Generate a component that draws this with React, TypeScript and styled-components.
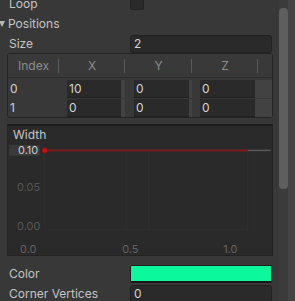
import React from 'react';
import styled, { createGlobalStyle } from 'styled-components';

const Global = createGlobalStyle`
  html, body { margin: 0; padding: 0; background: #383838; overflow: hidden; }
  body { font-family: Inter, "Noto Sans", sans-serif; font-size: 12px; color: #c4c4c4; }
  #root { width: 295px; height: 301px; }
`;

const Page = styled.div`
  display: flex;
  width: 295px;
  height: 301px;
  overflow: hidden;
  background: #383838;
`;

const Content = styled.div`
  width: 276px;
  display: flex;
  flex-direction: column;
  margin-top: -5px;
`;

const Row = styled.div<{ $mt?: number }>`
  display: flex;
  align-items: center;
  height: 18px;
  margin-top: ${(p) => p.$mt ?? 2}px;
  flex-shrink: 0;
`;

const Label = styled.div`
  width: 121px;
  padding-left: 9px;
  white-space: nowrap;
  line-height: 18px;
`;

const FoldLabel = styled.div`
  display: flex;
  align-items: center;
  gap: 3px;
  line-height: 18px;
`;

const Arrow = styled.span`
  width: 0;
  height: 0;
  border-left: 3.5px solid transparent;
  border-right: 3.5px solid transparent;
  border-top: 6px solid #b8b8b8;
  margin-left: -1px;
`;

const Checkbox = styled.div`
  width: 12px;
  height: 12px;
  background: #2a2a2a;
  border: 1px solid #232323;
  border-radius: 2px;
  margin-top: -2px;
`;

const Field = styled.div<{ $w?: number }>`
  box-sizing: border-box;
  width: ${(p) => p.$w ?? 142}px;
  height: 18px;
  background: #2a2a2a;
  border: 1px solid #212121;
  border-radius: 3px;
  padding-left: 3px;
  line-height: 16px;
  color: #d2d2d2;
`;

const ColorField = styled.div`
  box-sizing: border-box;
  width: 142px;
  height: 18px;
  background: #0cf89c;
  border: 1px solid #1f1f1f;
  border-bottom: 2px solid #1a1a1a;
  border-radius: 2px;
`;

const Table = styled.div`
  box-sizing: border-box;
  margin: 0 0 0 7px;
  width: 266px;
  border: 1px solid #242424;
  border-radius: 3px;
  display: flex;
  flex-direction: column;
  padding-bottom: 1px;
  flex-shrink: 0;
`;

const Grid = styled.div`
  display: grid;
  grid-template-columns: 51px 66px 67px 66px 1fr;
`;

const HeaderRow = styled(Grid)`
  height: 23px;
  border-bottom: 1px solid #2c2c2c;
  background: #393939;
`;

const HeaderCell = styled.div<{ $sep?: boolean }>`
  position: relative;
  display: flex;
  align-items: center;
  justify-content: center;
  color: #8c8c8c;
  &::after {
    content: '';
    display: ${(p) => (p.$sep ? 'block' : 'none')};
    position: absolute;
    right: 0;
    top: 5px;
    width: 1px;
    height: 14px;
    background: #5a5a5a;
  }
`;

const DataRow = styled(Grid)`
  height: 17px;
  margin-top: 2px;
  &:first-of-type { margin-top: 1px; }
`;

const IndexCell = styled.div`
  padding-left: 2px;
  line-height: 17px;
  color: #d0d0d0;
`;

const ValueCell = styled.div<{ $pl: number; $pr: number }>`
  display: flex;
  padding-left: ${(p) => p.$pl}px;
  padding-right: ${(p) => p.$pr}px;
  background: linear-gradient(to right, #383838 0 ${(p) => p.$pl}px, #424242 ${(p) => p.$pl}px);
`;

const CellField = styled.div`
  flex: 1;
  background: #2a2a2a;
  border-bottom: 1px solid #202020;
  padding-left: 2px;
  line-height: 17px;
  color: #d4d4d4;
`;

const Filler = styled.div`
  background: #424242;
`;

const CurvePanel = styled.div`
  box-sizing: border-box;
  margin: 6px 0 0 7px;
  width: 266px;
  height: 132px;
  background: #2a2a2a;
  border: 1px solid #232323;
  border-top: 2px solid #1c1c1c;
  display: flex;
  flex-direction: column;
  flex-shrink: 0;
`;

const CurveTitle = styled.div`
  padding: 1px 0 0 5px;
  height: 16px;
  line-height: 16px;
  color: #c8c8c8;
`;

const Chart = styled.svg`
  display: block;
  font-family: Inter, "Noto Sans", sans-serif;
`;

const Scroll = styled.div`
  width: 19px;
  display: flex;
  flex-direction: column;
  padding-top: 8px;
  background: linear-gradient(to right, #383838 0 3px, #3b3b3b 3px 12px, #444444 12px);
`;

const Thumb = styled.div`
  margin-left: 3px;
  width: 9px;
  height: 181px;
  background: #5e5e5e;
  border-radius: 4px;
`;

const cols = [
  { v: ['10', '0'], pl: 8, pr: 4 },
  { v: ['0', '0'], pl: 9, pr: 3 },
  { v: ['0', '0'], pl: 8, pr: 3 },
];

export default function App() {
  return (
    <>
      <Global />
      <Page>
        <Content>
          <Row $mt={0}>
            <Label>Loop</Label>
            <Checkbox />
          </Row>
          <Row>
            <FoldLabel>
              <Arrow />
              <span>Positions</span>
            </FoldLabel>
          </Row>
          <Row>
            <Label>Size</Label>
            <Field>2</Field>
          </Row>
          <Table>
            <HeaderRow>
              <HeaderCell $sep>Index</HeaderCell>
              <HeaderCell $sep>X</HeaderCell>
              <HeaderCell $sep>Y</HeaderCell>
              <HeaderCell $sep>Z</HeaderCell>
              <HeaderCell />
            </HeaderRow>
            {[0, 1].map((r) => (
              <DataRow key={r}>
                <IndexCell>{r}</IndexCell>
                {cols.map((c, i) => (
                  <ValueCell key={i} $pl={c.pl} $pr={c.pr}>
                    <CellField>{c.v[r]}</CellField>
                  </ValueCell>
                ))}
                <Filler />
              </DataRow>
            ))}
          </Table>
          <CurvePanel>
            <CurveTitle>Width</CurveTitle>
            <Chart width={264} height={113} viewBox="0 0 264 113">
              <g stroke="#303030" strokeWidth="1">
                <line x1="35.5" y1="7" x2="35.5" y2="88" />
                <line x1="118.5" y1="7" x2="118.5" y2="88" />
                <line x1="140.5" y1="7" x2="140.5" y2="88" />
                <line x1="240.5" y1="7" x2="240.5" y2="88" />
                <line x1="35" y1="87.5" x2="241" y2="87.5" />
              </g>
              <rect x="0" y="2" width="31" height="11" fill="#3a3a3a" />
              <text x="9" y="11" fontSize="11" fill="#cfcfcf">0.10</text>
              <line x1="240" y1="7.5" x2="264" y2="7.5" stroke="#5a5a5a" strokeWidth="1.5" />
              <line x1="36" y1="7.5" x2="241" y2="7.5" stroke="#7c1c1c" strokeWidth="2" />
              <circle cx="36" cy="7.5" r="2.8" fill="#c41414" stroke="#7c1010" strokeWidth="0.8" />
              <text x="8" y="48" fontSize="11" fill="#565656">0.05</text>
              <text x="8" y="88" fontSize="11" fill="#565656">0.00</text>
              <text x="11" y="111" fontSize="11" fill="#626262">0.0</text>
              <text x="114" y="111" fontSize="11" fill="#626262">0.5</text>
              <text x="216" y="111" fontSize="11" fill="#626262">1.0</text>
            </Chart>
          </CurvePanel>
          <Row $mt={9}>
            <Label>Color</Label>
            <ColorField />
          </Row>
          <Row $mt={2}>
            <Label>Corner Vertices</Label>
            <Field>0</Field>
          </Row>
        </Content>
        <Scroll>
          <Thumb />
        </Scroll>
      </Page>
    </>
  );
}
